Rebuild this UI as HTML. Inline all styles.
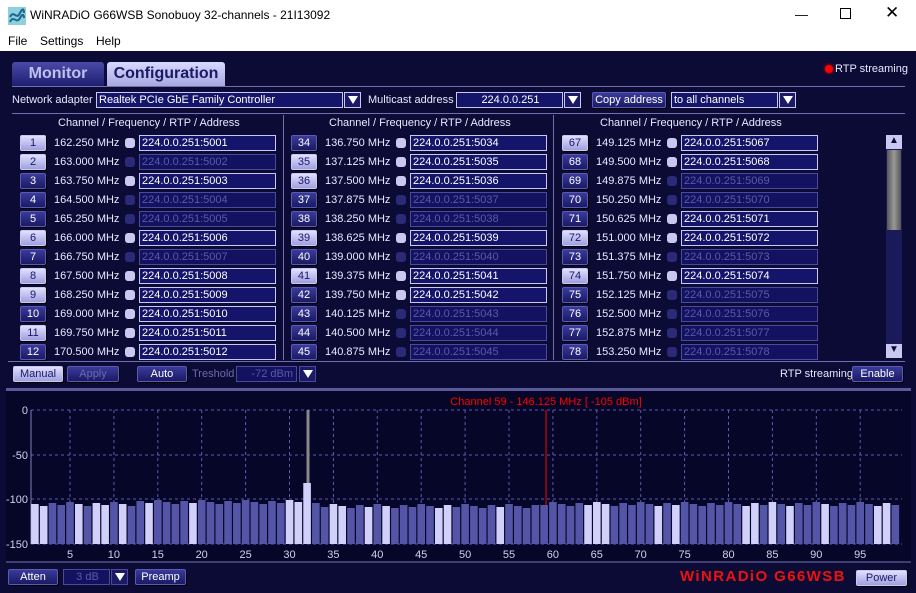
<!DOCTYPE html>
<html><head><meta charset="utf-8"><style>
*{margin:0;padding:0;box-sizing:border-box}
body{width:916px;height:593px;overflow:hidden;background:#fff;font-family:"Liberation Sans",sans-serif;position:relative}
.a{position:absolute}
#app{position:absolute;left:0;top:51px;width:916px;height:542px;background:#0b0b36}
.t{position:absolute;color:#e8e8ff;font-size:11px;white-space:nowrap}
.btn{position:absolute;height:16px;border-radius:2px;font-size:11px;text-align:center;line-height:15px;color:#fff;background:linear-gradient(#3a3a9a,#1a1a66);border:1px solid #5a5ab0;box-shadow:1px 1px 0 #000}
.btn.l{background:linear-gradient(#e0e0ff,#a0a0e0);color:#1a1a66;border-color:#c8c8f0}
.btn.d{color:#6a6ab0}
.box{position:absolute;height:16px;background:#14146a;border:1px solid #c8c8f0;color:#fff;font-size:11px;line-height:14px;padding-left:2px;white-space:nowrap}
.box.off{border-color:#4a4a98;color:#5a5aa8;background:#121260}
.cb{position:absolute;width:10px;height:10px;border-radius:3px;background:#c8c8f0}
.cb.off{background:#2a2a78}
.dd{position:absolute;width:17px;height:16px;background:#1a1a66;border:1px solid #c8c8f0}
.dd:after{content:"";position:absolute;left:3px;top:3px;border-left:5px solid transparent;border-right:5px solid transparent;border-top:8px solid #fff}
</style></head><body>
<svg class="a" style="left:8px;top:7px" width="18" height="18"><rect width="18" height="18" fill="#8fd0e0"/><path d="M2 10 C6 2,8 14,12 6 S16 6,16 6 M2 15 C6 7,8 18,12 11 S16 11,16 11" stroke="#1a6a8a" stroke-width="2" fill="none"/></svg>
<div class="a" style="left:30px;top:8px;font-size:12px;color:#000">WiNRADiO G66WSB Sonobuoy 32-channels - 21I13092</div>
<div class="a" style="left:795px;top:7px;font-size:13px">—</div>
<div class="a" style="left:840px;top:8px;width:11px;height:11px;border:1px solid #000"></div>
<div class="a" style="left:885px;top:3px;font-size:17px">✕</div>
<div class="a" style="left:8px;top:34px;font-size:12px">File</div>
<div class="a" style="left:40px;top:34px;font-size:12px">Settings</div>
<div class="a" style="left:96px;top:34px;font-size:12px">Help</div>
<div id="app"></div>
<div id="ov" class="a" style="left:0;top:0;width:916px;height:593px"></div>
<script>
var o=document.getElementById('ov'),h='';
function A(s){h+=s}
A('<div class="a" style="left:12px;top:62px;width:92px;height:24px;background:linear-gradient(#4a4aa8,#1e1e70);border-radius:3px 3px 0 0;color:#c0c0f0;font:bold 16px Liberation Sans;text-align:center;line-height:24px">Monitor</div>');
A('<div class="a" style="left:107px;top:62px;width:118px;height:24px;background:linear-gradient(#d8d8ff,#a8a8e0);border-radius:3px 3px 0 0;color:#1a1a66;font:bold 16px Liberation Sans;text-align:center;line-height:24px">Configuration</div>');
A('<div class="a" style="left:12px;top:86px;width:893px;height:1px;background:#7070b0"></div>');
A('<div class="a" style="left:825px;top:65px;width:8px;height:8px;border-radius:4px;background:#f00;box-shadow:0 0 3px #f00"></div><div class="t" style="left:835px;top:63px">RTP streaming</div>');
A('<div class="t" style="left:12px;top:94px">Network adapter</div><div class="box" style="left:96px;top:92px;width:247px">Realtek PCIe GbE Family Controller</div><div class="dd" style="left:344px;top:92px"></div>');
A('<div class="t" style="left:368px;top:94px">Multicast address</div><div class="box" style="left:456px;top:92px;width:107px;text-align:center">224.0.0.251</div><div class="dd" style="left:564px;top:92px"></div>');
A('<div class="btn" style="left:592px;top:92px;width:74px">Copy address</div><div class="box" style="left:671px;top:92px;width:107px">to all channels</div><div class="dd" style="left:779px;top:92px"></div>');
A('<div class="a" style="left:12px;top:113px;width:893px;height:1px;background:#7070b0"></div>');
A('<div class="a" style="left:283px;top:115px;width:1px;height:245px;background:#7070b0"></div><div class="a" style="left:553px;top:115px;width:1px;height:245px;background:#7070b0"></div>');
var cols=[[1,162.25,.75,'101001011111','110001011010'],[34,136.75,.375,'111001011000','011001010000'],[67,149.125,.375,'110011010000','100001010000']];
cols.forEach(function(c,ci){var ox=ci==0?0:ci==1?271:542;
A('<div class="t" style="left:'+(58+ox)+'px;top:117px">Channel / Frequency / RTP / Address</div>');
for(var i=0;i<12;i++){var y=135+i*19,n=c[0]+i,on=c[3][i]=='1',li=c[4][i]=='1';
A('<div class="btn'+(li?' l':'')+'" style="left:'+(20+ox)+'px;top:'+y+'px;width:26px">'+n+'</div>');
A('<div class="t" style="left:'+(54+ox)+'px;top:'+(y+2)+'px">'+(c[1]+i*c[2]).toFixed(3)+' MHz</div>');
A('<div class="cb'+(on?'':' off')+'" style="left:'+(125+ox)+'px;top:'+(y+3)+'px"></div>');
A('<div class="box'+(on?'':' off')+'" style="left:'+(139+ox)+'px;top:'+y+'px;width:137px">224.0.0.251:'+(5000+n)+'</div>');}});
A('<div class="a" style="left:886px;top:135px;width:16px;height:223px;background:#1a1a5a"></div><div class="a" style="left:886px;top:135px;width:16px;height:14px;background:#c8c8f0;color:#0b0b36;font-size:10px;text-align:center">▲</div><div class="a" style="left:887px;top:150px;width:14px;height:80px;background:linear-gradient(90deg,#555,#999,#555)"></div><div class="a" style="left:886px;top:344px;width:16px;height:14px;background:#c8c8f0;color:#0b0b36;font-size:10px;text-align:center">▼</div>');
A('<div class="a" style="left:8px;top:361px;width:897px;height:1px;background:#7070b0"></div>');
A('<div class="btn l" style="left:13px;top:366px;width:50px">Manual</div><div class="btn d" style="left:67px;top:366px;width:52px">Apply</div><div class="btn" style="left:137px;top:366px;width:50px">Auto</div><div class="t" style="left:192px;top:368px;color:#6a6ab0">Treshold</div><div class="box off" style="left:236px;top:366px;width:61px;text-align:right;padding-right:3px">-72 dBm</div><div class="dd" style="left:299px;top:366px;border-color:#4a4a98"></div>');
A('<div class="t" style="left:780px;top:368px">RTP streaming</div><div class="btn" style="left:852px;top:366px;width:51px">Enable</div>');
A('<div class="a" style="left:6px;top:388px;width:905px;height:3px;background:#5a5a9a"></div><div class="a" style="left:6px;top:391px;width:905px;height:170px;background:#060628"></div>');
var s='<svg class="a" style="left:0;top:0" width="916" height="593">';
[[410,'0'],[455,'-50'],[499,'-100'],[544,'-150']].forEach(function(g){s+='<line x1="31" y1="'+g[0]+'" x2="902" y2="'+g[0]+'" stroke="#5a5ab8" stroke-dasharray="3,3"/><text x="28" y="'+(g[0]+4)+'" fill="#d0d0f0" font-size="11" text-anchor="end" font-family="Liberation Sans">'+g[1]+'</text>';});
s+='<line x1="31" y1="410" x2="31" y2="544" stroke="#8080c0"/>';
for(var k=5;k<=95;k+=5){var x=70+(k-5)*8.78;s+='<line x1="'+x+'" y1="410" x2="'+x+'" y2="544" stroke="#5a5ab8" stroke-dasharray="3,3"/><text x="'+x+'" y="558" fill="#d0d0f0" font-size="11" text-anchor="middle" font-family="Liberation Sans">'+k+'</text>';}
var lights=[1,2,6,8,9,11,14,19,30,31,32,35,36,39,41,47,48,54,64,65,66,72,74,82,83,85,87,91,97,98];
s+='<rect x="306.5" y="410" width="3" height="74" fill="#888"/>';
for(var n=1;n<=99;n++){var cx=34.9+(n-1)*8.78;var t=502+((n*7)%5)-(n>12&&n<33?2:0)+(n>33&&n<60?2:0);if(n==32)t=483;if(n==59)t=505;
s+='<rect x="'+(cx-3.8)+'" y="'+t+'" width="7.6" height="'+(544-t)+'" fill="'+(lights.indexOf(n)>=0?'#d0d0fa':'#5555a8')+'"/>';}
s+='<line x1="546" y1="410" x2="546" y2="505" stroke="#f00"/><text x="546" y="405" fill="#f00" font-size="11" text-anchor="middle" font-family="Liberation Sans">Channel 59 - 146.125 MHz [ -105 dBm]</text>';
s+='<line x1="6" y1="562" x2="911" y2="562" stroke="#7070b0"/></svg>';
A(s);
A('<div class="btn" style="left:8px;top:569px;width:50px">Atten</div><div class="box off" style="left:63px;top:569px;width:47px;text-align:center">3 dB</div><div class="dd" style="left:111px;top:569px;border-color:#4a4a98"></div><div class="btn" style="left:135px;top:569px;width:51px">Preamp</div>');
A('<div class="a" style="left:680px;top:568px;color:#f01010;font:bold 15px Liberation Sans;letter-spacing:1.4px">WiNRADiO G66WSB</div><div class="btn l" style="left:856px;top:570px;width:51px">Power</div>');
o.innerHTML=h;
</script>
</body></html>
